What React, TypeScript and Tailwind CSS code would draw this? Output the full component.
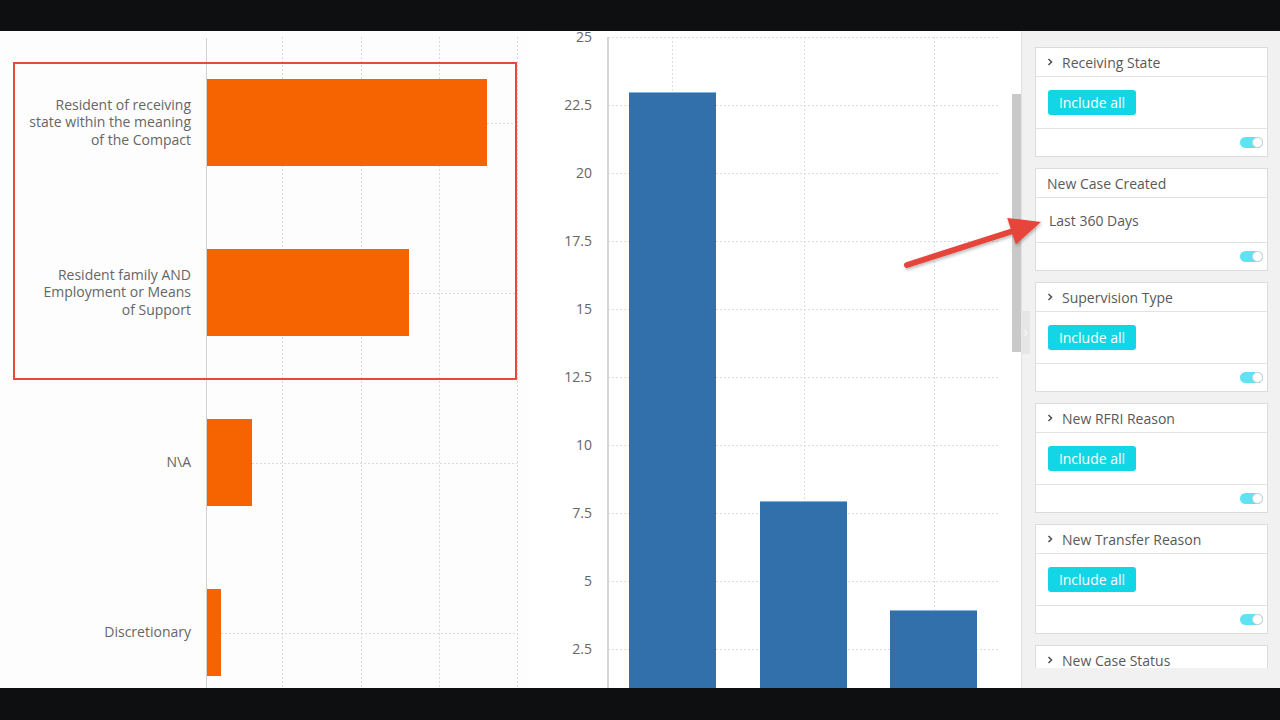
import React from "react";

const leftRows = [
  { label: ["Resident of receiving", "state within the meaning", "of the Compact"], w: 280 },
  { label: ["Resident family AND", "Employment or Means", "of Support"], w: 202 },
  { label: ["N\\A"], w: 45 },
  { label: ["Discretionary"], w: 14 },
];

const yTicks = ["25", "22.5", "20", "17.5", "15", "12.5", "10", "7.5", "5", "2.5"];

const bars = [
  { x: 22, top: 61 },
  { x: 153, top: 470 },
  { x: 283, top: 579 },
];

function LeftChart() {
  const rowCenters = [92, 262, 432, 602];
  return (
    <div className="relative w-[530px] h-full bg-[#fdfdfd] shrink-0">
      <svg className="absolute inset-0" width="530" height="657">
        {[282, 361, 439, 517].map((x) => (
          <line key={x} x1={x + 0.5} y1={6} x2={x + 0.5} y2={657} stroke="#dadada" strokeDasharray="2 2" />
        ))}
        {rowCenters.map((y, i) => (
          <line key={y} x1={207 + leftRows[i].w} y1={y + 0.5} x2={517} y2={y + 0.5} stroke="#dadada" strokeDasharray="2 2" />
        ))}
        <line x1={206.5} y1={7} x2={206.5} y2={657} stroke="#d2d2d2" />
      </svg>
      <div className="relative flex flex-col pt-[6px]">
        {leftRows.map((r, i) => (
          <div key={i} className="h-[170px] flex items-center">
            <div className="w-[191px] text-right text-[14px] leading-[17.5px] text-[#666]">
              {r.label.map((l, j) => (
                <div key={j}>{l}</div>
              ))}
            </div>
            <div className="ml-[16px] h-[87px] bg-[#f56400]" style={{ width: r.w }} />
          </div>
        ))}
      </div>
    </div>
  );
}

function MiddleChart() {
  return (
    <div className="flex w-[470px] h-full bg-white shrink-0">
      <div className="w-[62px] flex flex-col gap-[48px] mt-[-4px] text-right text-[14px] text-[#666]">
        {yTicks.map((t) => (
          <div key={t} className="h-[20px] leading-[20px]">
            {t}
          </div>
        ))}
      </div>
      <div className="w-[15px]" />
      <svg width="393" height="657" className="shrink-0">
        {yTicks.map((t, i) => (
          <line key={t} x1={1} y1={6.5 + 68 * i} x2={393} y2={6.5 + 68 * i} stroke="#dcdcdc" strokeDasharray="2 2" />
        ))}
        {[65, 197, 327].map((x) => (
          <line key={x} x1={x + 0.5} y1={6} x2={x + 0.5} y2={657} stroke="#dcdcdc" strokeDasharray="2 2" />
        ))}
        {bars.map((b) => (
          <g key={b.x}>
            <rect x={b.x} y={b.top} width={87} height={657 - b.top} fill="#3170aa" />
            <rect x={b.x} y={b.top} width={87} height={1} fill="#7fb6e6" />
          </g>
        ))}
        <line x1={1} y1={6} x2={1} y2={657} stroke="#d6d6d6" strokeWidth={2} />
      </svg>
    </div>
  );
}

function Toggle() {
  return (
    <div className="relative w-[23px] h-[11px] rounded-full bg-[#5fe3f2]">
      <div className="absolute right-0 top-0 w-[11px] h-[11px] rounded-full bg-white border border-[#cfcfcf]" />
    </div>
  );
}

function Chevron() {
  return (
    <svg width="6" height="8" viewBox="0 0 6 8" className="shrink-0">
      <polyline points="1.5,1 4.5,4 1.5,7" fill="none" stroke="#555" strokeWidth="1.6" />
    </svg>
  );
}

function Card({ title, chevron, body }: { title: string; chevron: boolean; body: "include" | "days" }) {
  return (
    <div className="bg-white border border-[#dcdcdc] shrink-0">
      <div className={`h-[29px] border-b border-[#e2e2e2] flex items-center text-[14px] text-[#595959] ${chevron ? "pl-[11px] gap-[9px]" : "pl-[11px]"}`}>
        {chevron && <Chevron />}
        <span>{title}</span>
      </div>
      {body === "include" ? (
        <div className="h-[52px] border-b border-[#e2e2e2] flex items-center pl-[12px]">
          <div className="w-[88px] h-[25px] rounded-[3px] bg-[#12d6e6] text-white text-[14px] leading-[25px] text-center">
            Include all
          </div>
        </div>
      ) : (
        <div className="h-[45px] border-b border-[#e2e2e2] flex items-center pl-[13px] text-[14px] text-[#595959]">
          Last 360 Days
        </div>
      )}
      <div className="h-[27px] flex items-center justify-end pr-[4px]">
        <Toggle />
      </div>
    </div>
  );
}

function RightPanel() {
  return (
    <div className="w-[259px] h-full bg-[#f1f1f1] border-l border-[#e2e2e2] shrink-0 flex flex-col">
      <div className="h-[637px] overflow-hidden pt-[16px] pl-[13px] pr-[12px] flex flex-col gap-[11px]">
        <Card title="Receiving State" chevron body="include" />
        <Card title="New Case Created" chevron={false} body="days" />
        <Card title="Supervision Type" chevron body="include" />
        <Card title="New RFRI Reason" chevron body="include" />
        <Card title="New Transfer Reason" chevron body="include" />
        <Card title="New Case Status" chevron body="include" />
      </div>
    </div>
  );
}

export default function App() {
  return (
    <div className="w-[1280px] h-[720px] bg-[#0d0f10] flex flex-col font-['Open_Sans','Noto_Sans',sans-serif]">
      <div className="h-[31px] shrink-0" />
      <div className="relative h-[657px] flex bg-white overflow-hidden shrink-0">
        <LeftChart />
        <MiddleChart />
        <div className="w-[21px] h-full bg-white shrink-0 pt-[63px] pl-[12px]">
          <div className="w-[9px] h-[258px] bg-[#c9c9c9]" />
        </div>
        <RightPanel />
        <div className="absolute left-[1021px] top-[280px] w-[9px] h-[43px] bg-[#e6e6e6] flex items-center justify-center">
          <svg width="5" height="8" viewBox="0 0 5 8">
            <polyline points="1,1 4,4 1,7" fill="none" stroke="#f8f8f8" strokeWidth="1.2" />
          </svg>
        </div>
        <div className="absolute left-[13px] top-[31px] w-[504px] h-[318px] border-2 border-[#e64a3d]" />
        <svg className="absolute left-0 top-0 pointer-events-none" width="1280" height="657">
          <defs>
            <filter id="sh" x="-10%" y="-30%" width="120%" height="160%">
              <feDropShadow dx="1" dy="2" stdDeviation="1.5" floodColor="#000" floodOpacity="0.25" />
            </filter>
          </defs>
          <g filter="url(#sh)" fill="#e5453a">
            <line x1={907} y1={234} x2={1013} y2={200} stroke="#e5453a" strokeWidth={6} strokeLinecap="round" />
            <polygon points="1041,191 1015.8,213.5 1007.2,186.9" />
          </g>
        </svg>
      </div>
      <div className="flex-1" />
    </div>
  );
}
